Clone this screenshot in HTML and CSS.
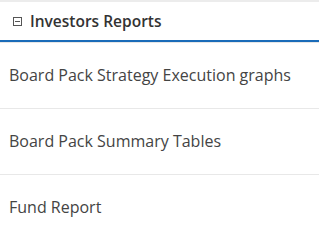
FILE: index.html
```html
<!DOCTYPE html>
<html lang="en">
<head>
  <meta charset="UTF-8">
  <title>Investors Reports</title>
  <link rel="stylesheet" href="styles.css">
</head>
<body>
  <div class="panel">
    <div class="panel-header">
      <svg class="toggle" width="9" height="9" viewBox="0 0 9 9">
        <rect x="0.5" y="0.5" width="8" height="8" fill="none" stroke="#555" stroke-width="1"/>
        <line x1="2" y1="4.5" x2="7" y2="4.5" stroke="#555" stroke-width="1"/>
      </svg>
      <span class="title">Investors Reports</span>
    </div>
    <ul class="reports">
      <li>Board Pack Strategy Execution graphs</li>
      <li>Board Pack Summary Tables</li>
      <li>Fund Report</li>
    </ul>
  </div>
</body>
</html>
```

FILE: styles.css
```css
body {
  margin: 0;
  font-family: 'Open Sans', sans-serif;
  background: #fff;
  color: #444;
}

.panel {
  border-top: 2px solid #ececec;
}

.panel-header {
  display: flex;
  align-items: center;
  gap: 8px;
  height: 38px;
  padding-left: 13px;
  border-bottom: 2px solid #1a6bb8;
  box-shadow: 0 1px 0 #e6e6e6;
}

.toggle {
  flex: none;
}

.title {
  font-size: 15.5px;
  font-weight: 600;
  color: #333;
}

.reports {
  list-style: none;
  margin: 0;
  padding: 0;
}

.reports li {
  height: 65px;
  line-height: 65px;
  padding-left: 9px;
  font-size: 16px;
  border-bottom: 1px solid #e8e8e8;
}

.reports li:first-child {
  height: 66px;
  line-height: 66px;
}
```
